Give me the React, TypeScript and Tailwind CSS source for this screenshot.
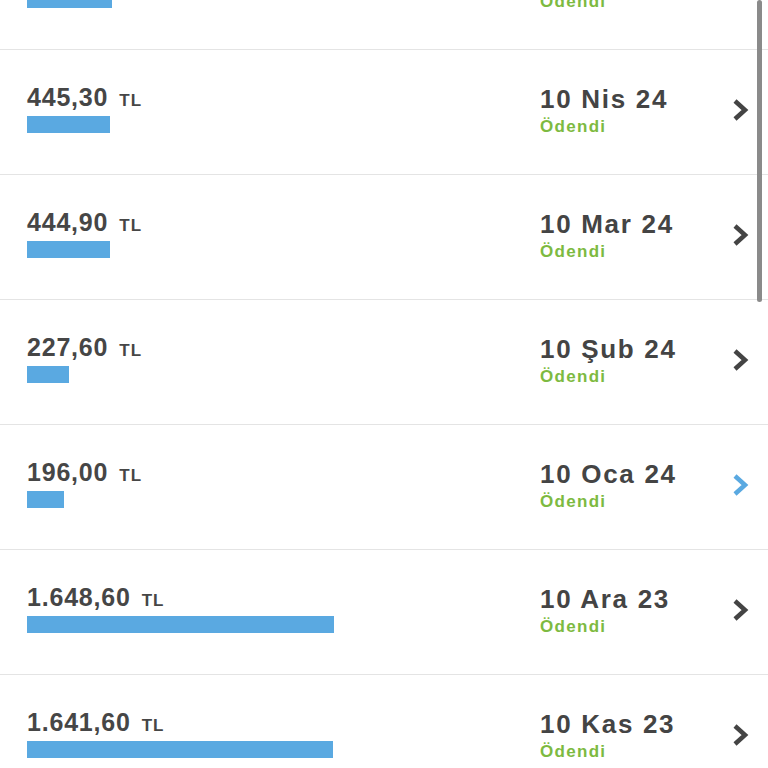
import React from "react";

type Payment = {
  amount: number;
  date: string;
  status: string;
  active?: boolean;
};

const payments: Payment[] = [
  { amount: 456.5, date: "10 May 24", status: "Ödendi" },
  { amount: 445.3, date: "10 Nis 24", status: "Ödendi" },
  { amount: 444.9, date: "10 Mar 24", status: "Ödendi" },
  { amount: 227.6, date: "10 Şub 24", status: "Ödendi" },
  { amount: 196.0, date: "10 Oca 24", status: "Ödendi", active: true },
  { amount: 1648.6, date: "10 Ara 23", status: "Ödendi" },
  { amount: 1641.6, date: "10 Kas 23", status: "Ödendi" },
];

// pixels of bar per lira
const BAR_SCALE = 0.1863;

const formatAmount = (value: number) =>
  value.toLocaleString("tr-TR", { minimumFractionDigits: 2, maximumFractionDigits: 2 });

const Chevron = ({ active }: { active?: boolean }) => (
  <svg width="20" height="28" viewBox="0 0 20 28" className="shrink-0">
    <polyline
      points="4,5 14,14 4,23"
      fill="none"
      stroke={active ? "#5aa9e1" : "#444444"}
      strokeWidth="4.5"
      strokeLinejoin="miter"
    />
  </svg>
);

const PaymentRow = ({ payment }: { payment: Payment }) => (
  <div className="flex h-[125px] items-start border-b border-[#e4e4e4] bg-white pl-[27px] pr-[17px]">
    <div className="flex-1 pt-[32px]">
      <div className="flex items-baseline text-[#464646] font-bold">
        <span className="text-[25px] leading-[30px] tracking-[0.8px]">{formatAmount(payment.amount)}</span>
        <span className="ml-[11px] text-[17px] tracking-[1px]">TL</span>
      </div>
      <div
        className="mt-[2px] h-[17px] bg-[#5aa9e1]"
        style={{ width: Math.round(payment.amount * BAR_SCALE) }}
      />
    </div>
    <div className="w-[192px] pl-[1px] pt-[34px]">
      <div className="text-[26px] leading-[30px] font-bold tracking-[1.7px] text-[#444444]">{payment.date}</div>
      <div className="mt-[3px] text-[17px] leading-[20px] font-bold tracking-[1.3px] text-[#7dba41]">{payment.status}</div>
    </div>
    <div className="self-center -mt-[4px]">
      <Chevron active={payment.active} />
    </div>
  </div>
);

export default function App() {
  return (
    <div
      className="relative h-[768px] w-[768px] overflow-hidden bg-white"
      style={{ fontFamily: '"Liberation Sans", Arial, sans-serif' }}
    >
      <div className="-mt-[75px]">
        {payments.map((p, i) => (
          <PaymentRow key={i} payment={p} />
        ))}
      </div>
      {/* scroll indicator */}
      <div className="absolute right-[6px] top-0 h-[302px] w-[5px] rounded-full bg-[#8a8a8a]" />
    </div>
  );
}
